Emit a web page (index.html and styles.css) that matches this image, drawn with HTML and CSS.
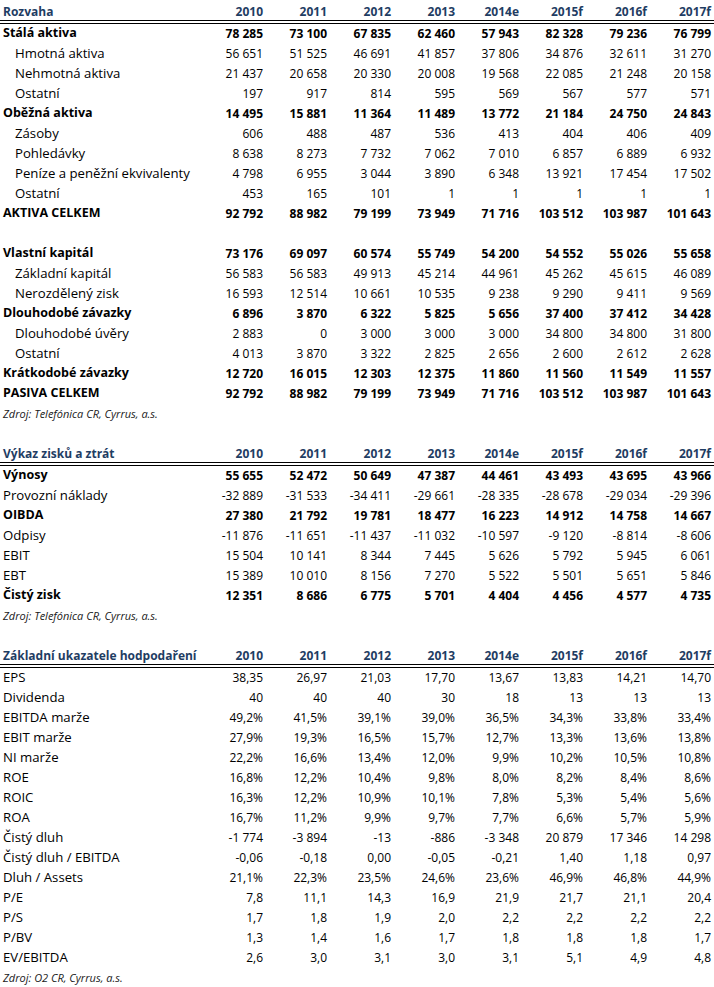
FILE: index.html
```html
<!DOCTYPE html>
<html lang="cs">
<head>
<meta charset="utf-8">
<title>Rozvaha</title>
<link rel="stylesheet" href="styles.css">
</head>
<body>
<div class="page">

<section class="sheet">
  <div class="row head"><span class="label">Rozvaha</span><span>2010</span><span>2011</span><span>2012</span><span>2013</span><span>2014e</span><span>2015f</span><span>2016f</span><span>2017f</span></div>
  <div class="rule"></div>
  <div class="row bold"><span class="label">Stálá aktiva</span><span>78&nbsp;285</span><span>73&nbsp;100</span><span>67&nbsp;835</span><span>62&nbsp;460</span><span>57&nbsp;943</span><span>82&nbsp;328</span><span>79&nbsp;236</span><span>76&nbsp;799</span></div>
  <div class="row"><span class="label sub">Hmotná aktiva</span><span>56&nbsp;651</span><span>51&nbsp;525</span><span>46&nbsp;691</span><span>41&nbsp;857</span><span>37&nbsp;806</span><span>34&nbsp;876</span><span>32&nbsp;611</span><span>31&nbsp;270</span></div>
  <div class="row"><span class="label sub">Nehmotná aktiva</span><span>21&nbsp;437</span><span>20&nbsp;658</span><span>20&nbsp;330</span><span>20&nbsp;008</span><span>19&nbsp;568</span><span>22&nbsp;085</span><span>21&nbsp;248</span><span>20&nbsp;158</span></div>
  <div class="row"><span class="label sub">Ostatní</span><span>197</span><span>917</span><span>814</span><span>595</span><span>569</span><span>567</span><span>577</span><span>571</span></div>
  <div class="row bold"><span class="label">Oběžná aktiva</span><span>14&nbsp;495</span><span>15&nbsp;881</span><span>11&nbsp;364</span><span>11&nbsp;489</span><span>13&nbsp;772</span><span>21&nbsp;184</span><span>24&nbsp;750</span><span>24&nbsp;843</span></div>
  <div class="row"><span class="label sub">Zásoby</span><span>606</span><span>488</span><span>487</span><span>536</span><span>413</span><span>404</span><span>406</span><span>409</span></div>
  <div class="row"><span class="label sub">Pohledávky</span><span>8&nbsp;638</span><span>8&nbsp;273</span><span>7&nbsp;732</span><span>7&nbsp;062</span><span>7&nbsp;010</span><span>6&nbsp;857</span><span>6&nbsp;889</span><span>6&nbsp;932</span></div>
  <div class="row"><span class="label sub">Peníze a peněžní ekvivalenty</span><span>4&nbsp;798</span><span>6&nbsp;955</span><span>3&nbsp;044</span><span>3&nbsp;890</span><span>6&nbsp;348</span><span>13&nbsp;921</span><span>17&nbsp;454</span><span>17&nbsp;502</span></div>
  <div class="row"><span class="label sub">Ostatní</span><span>453</span><span>165</span><span>101</span><span>1</span><span>1</span><span>1</span><span>1</span><span>1</span></div>
  <div class="row bold"><span class="label">AKTIVA CELKEM</span><span>92&nbsp;792</span><span>88&nbsp;982</span><span>79&nbsp;199</span><span>73&nbsp;949</span><span>71&nbsp;716</span><span>103&nbsp;512</span><span>103&nbsp;987</span><span>101&nbsp;643</span></div>
  <div class="row empty"></div>
  <div class="row bold"><span class="label">Vlastní kapitál</span><span>73&nbsp;176</span><span>69&nbsp;097</span><span>60&nbsp;574</span><span>55&nbsp;749</span><span>54&nbsp;200</span><span>54&nbsp;552</span><span>55&nbsp;026</span><span>55&nbsp;658</span></div>
  <div class="row"><span class="label sub">Základní kapitál</span><span>56&nbsp;583</span><span>56&nbsp;583</span><span>49&nbsp;913</span><span>45&nbsp;214</span><span>44&nbsp;961</span><span>45&nbsp;262</span><span>45&nbsp;615</span><span>46&nbsp;089</span></div>
  <div class="row"><span class="label sub">Nerozdělený zisk</span><span>16&nbsp;593</span><span>12&nbsp;514</span><span>10&nbsp;661</span><span>10&nbsp;535</span><span>9&nbsp;238</span><span>9&nbsp;290</span><span>9&nbsp;411</span><span>9&nbsp;569</span></div>
  <div class="row bold"><span class="label">Dlouhodobé závazky</span><span>6&nbsp;896</span><span>3&nbsp;870</span><span>6&nbsp;322</span><span>5&nbsp;825</span><span>5&nbsp;656</span><span>37&nbsp;400</span><span>37&nbsp;412</span><span>34&nbsp;428</span></div>
  <div class="row"><span class="label sub">Dlouhodobé úvěry</span><span>2&nbsp;883</span><span>0</span><span>3&nbsp;000</span><span>3&nbsp;000</span><span>3&nbsp;000</span><span>34&nbsp;800</span><span>34&nbsp;800</span><span>31&nbsp;800</span></div>
  <div class="row"><span class="label sub">Ostatní</span><span>4&nbsp;013</span><span>3&nbsp;870</span><span>3&nbsp;322</span><span>2&nbsp;825</span><span>2&nbsp;656</span><span>2&nbsp;600</span><span>2&nbsp;612</span><span>2&nbsp;628</span></div>
  <div class="row bold"><span class="label">Krátkodobé závazky</span><span>12&nbsp;720</span><span>16&nbsp;015</span><span>12&nbsp;303</span><span>12&nbsp;375</span><span>11&nbsp;860</span><span>11&nbsp;560</span><span>11&nbsp;549</span><span>11&nbsp;557</span></div>
  <div class="row bold"><span class="label">PASIVA CELKEM</span><span>92&nbsp;792</span><span>88&nbsp;982</span><span>79&nbsp;199</span><span>73&nbsp;949</span><span>71&nbsp;716</span><span>103&nbsp;512</span><span>103&nbsp;987</span><span>101&nbsp;643</span></div>
  <div class="source">Zdroj: Telefónica CR, Cyrrus, a.s.</div>
</section>

<section class="sheet">
  <div class="row head"><span class="label">Výkaz zisků a ztrát</span><span>2010</span><span>2011</span><span>2012</span><span>2013</span><span>2014e</span><span>2015f</span><span>2016f</span><span>2017f</span></div>
  <div class="rule"></div>
  <div class="row bold"><span class="label">Výnosy</span><span>55&nbsp;655</span><span>52&nbsp;472</span><span>50&nbsp;649</span><span>47&nbsp;387</span><span>44&nbsp;461</span><span>43&nbsp;493</span><span>43&nbsp;695</span><span>43&nbsp;966</span></div>
  <div class="row"><span class="label">Provozní náklady</span><span>-32&nbsp;889</span><span>-31&nbsp;533</span><span>-34&nbsp;411</span><span>-29&nbsp;661</span><span>-28&nbsp;335</span><span>-28&nbsp;678</span><span>-29&nbsp;034</span><span>-29&nbsp;396</span></div>
  <div class="row bold"><span class="label">OIBDA</span><span>27&nbsp;380</span><span>21&nbsp;792</span><span>19&nbsp;781</span><span>18&nbsp;477</span><span>16&nbsp;223</span><span>14&nbsp;912</span><span>14&nbsp;758</span><span>14&nbsp;667</span></div>
  <div class="row"><span class="label">Odpisy</span><span>-11&nbsp;876</span><span>-11&nbsp;651</span><span>-11&nbsp;437</span><span>-11&nbsp;032</span><span>-10&nbsp;597</span><span>-9&nbsp;120</span><span>-8&nbsp;814</span><span>-8&nbsp;606</span></div>
  <div class="row"><span class="label">EBIT</span><span>15&nbsp;504</span><span>10&nbsp;141</span><span>8&nbsp;344</span><span>7&nbsp;445</span><span>5&nbsp;626</span><span>5&nbsp;792</span><span>5&nbsp;945</span><span>6&nbsp;061</span></div>
  <div class="row"><span class="label">EBT</span><span>15&nbsp;389</span><span>10&nbsp;010</span><span>8&nbsp;156</span><span>7&nbsp;270</span><span>5&nbsp;522</span><span>5&nbsp;501</span><span>5&nbsp;651</span><span>5&nbsp;846</span></div>
  <div class="row bold"><span class="label">Čistý zisk</span><span>12&nbsp;351</span><span>8&nbsp;686</span><span>6&nbsp;775</span><span>5&nbsp;701</span><span>4&nbsp;404</span><span>4&nbsp;456</span><span>4&nbsp;577</span><span>4&nbsp;735</span></div>
  <div class="source">Zdroj: Telefónica CR, Cyrrus, a.s.</div>
</section>

<section class="sheet">
  <div class="row head"><span class="label">Základní ukazatele hodpodaření</span><span>2010</span><span>2011</span><span>2012</span><span>2013</span><span>2014e</span><span>2015f</span><span>2016f</span><span>2017f</span></div>
  <div class="rule"></div>
  <div class="row"><span class="label">EPS</span><span>38,35</span><span>26,97</span><span>21,03</span><span>17,70</span><span>13,67</span><span>13,83</span><span>14,21</span><span>14,70</span></div>
  <div class="row"><span class="label">Dividenda</span><span>40</span><span>40</span><span>40</span><span>30</span><span>18</span><span>13</span><span>13</span><span>13</span></div>
  <div class="row"><span class="label">EBITDA marže</span><span>49,2%</span><span>41,5%</span><span>39,1%</span><span>39,0%</span><span>36,5%</span><span>34,3%</span><span>33,8%</span><span>33,4%</span></div>
  <div class="row"><span class="label">EBIT marže</span><span>27,9%</span><span>19,3%</span><span>16,5%</span><span>15,7%</span><span>12,7%</span><span>13,3%</span><span>13,6%</span><span>13,8%</span></div>
  <div class="row"><span class="label">NI marže</span><span>22,2%</span><span>16,6%</span><span>13,4%</span><span>12,0%</span><span>9,9%</span><span>10,2%</span><span>10,5%</span><span>10,8%</span></div>
  <div class="row"><span class="label">ROE</span><span>16,8%</span><span>12,2%</span><span>10,4%</span><span>9,8%</span><span>8,0%</span><span>8,2%</span><span>8,4%</span><span>8,6%</span></div>
  <div class="row"><span class="label">ROIC</span><span>16,3%</span><span>12,2%</span><span>10,9%</span><span>10,1%</span><span>7,8%</span><span>5,3%</span><span>5,4%</span><span>5,6%</span></div>
  <div class="row"><span class="label">ROA</span><span>16,7%</span><span>11,2%</span><span>9,9%</span><span>9,7%</span><span>7,7%</span><span>6,6%</span><span>5,7%</span><span>5,9%</span></div>
  <div class="row"><span class="label">Čistý dluh</span><span>-1&nbsp;774</span><span>-3&nbsp;894</span><span>-13</span><span>-886</span><span>-3&nbsp;348</span><span>20&nbsp;879</span><span>17&nbsp;346</span><span>14&nbsp;298</span></div>
  <div class="row"><span class="label">Čistý dluh / EBITDA</span><span>-0,06</span><span>-0,18</span><span>0,00</span><span>-0,05</span><span>-0,21</span><span>1,40</span><span>1,18</span><span>0,97</span></div>
  <div class="row"><span class="label">Dluh / Assets</span><span>21,1%</span><span>22,3%</span><span>23,5%</span><span>24,6%</span><span>23,6%</span><span>46,9%</span><span>46,8%</span><span>44,9%</span></div>
  <div class="row"><span class="label">P/E</span><span>7,8</span><span>11,1</span><span>14,3</span><span>16,9</span><span>21,9</span><span>21,7</span><span>21,1</span><span>20,4</span></div>
  <div class="row"><span class="label">P/S</span><span>1,7</span><span>1,8</span><span>1,9</span><span>2,0</span><span>2,2</span><span>2,2</span><span>2,2</span><span>2,2</span></div>
  <div class="row"><span class="label">P/BV</span><span>1,3</span><span>1,4</span><span>1,6</span><span>1,7</span><span>1,8</span><span>1,8</span><span>1,8</span><span>1,7</span></div>
  <div class="row"><span class="label">EV/EBITDA</span><span>2,6</span><span>3,0</span><span>3,1</span><span>3,0</span><span>3,1</span><span>5,1</span><span>4,9</span><span>4,8</span></div>
  <div class="source">Zdroj: O2 CR, Cyrrus, a.s.</div>
</section>

</div>
</body>
</html>
```

FILE: styles.css
```css
html, body {
  margin: 0;
  padding: 0;
  background: #ffffff;
  overflow: hidden;
}

.page {
  width: 714px;
  padding-top: 4px;
  font-family: "Open Sans", "Noto Sans", sans-serif;
  color: #000000;
  display: flex;
  flex-direction: column;
  gap: 22px;
}

.sheet {
  display: flex;
  flex-direction: column;
}

.row {
  display: grid;
  grid-template-columns: 201px repeat(8, 64px);
  height: 20px;
  white-space: nowrap;
}

/* numeric cells */
.row > span {
  display: block;
  font-size: 12px;
  line-height: 19.3px;
  text-align: right;
  padding-right: 2px;
}

/* row labels */
.row > .label {
  font-size: 13.2px;
  line-height: 18.4px;
  text-align: left;
  padding-left: 3px;
  padding-right: 0;
}

.row > .label.sub {
  padding-left: 15px;
}

.bold {
  font-weight: 700;
}

.bold > .label {
  font-size: 12.5px;
  line-height: 18.9px;
}

/* table header */
.head {
  height: 16px;
  font-weight: 700;
  color: #1f3d63;
}

.head > span {
  line-height: 15.1px;
}

.head > .label {
  font-size: 12px;
  line-height: 15.1px;
}

.rule {
  height: 2px;
  border-top: 1px solid #000000;
  border-bottom: 1px solid #000000;
}

.source {
  height: 20px;
  line-height: 19.5px;
  padding-left: 3px;
  font-size: 11px;
  font-style: italic;
  color: #1a1a1a;
}
```
